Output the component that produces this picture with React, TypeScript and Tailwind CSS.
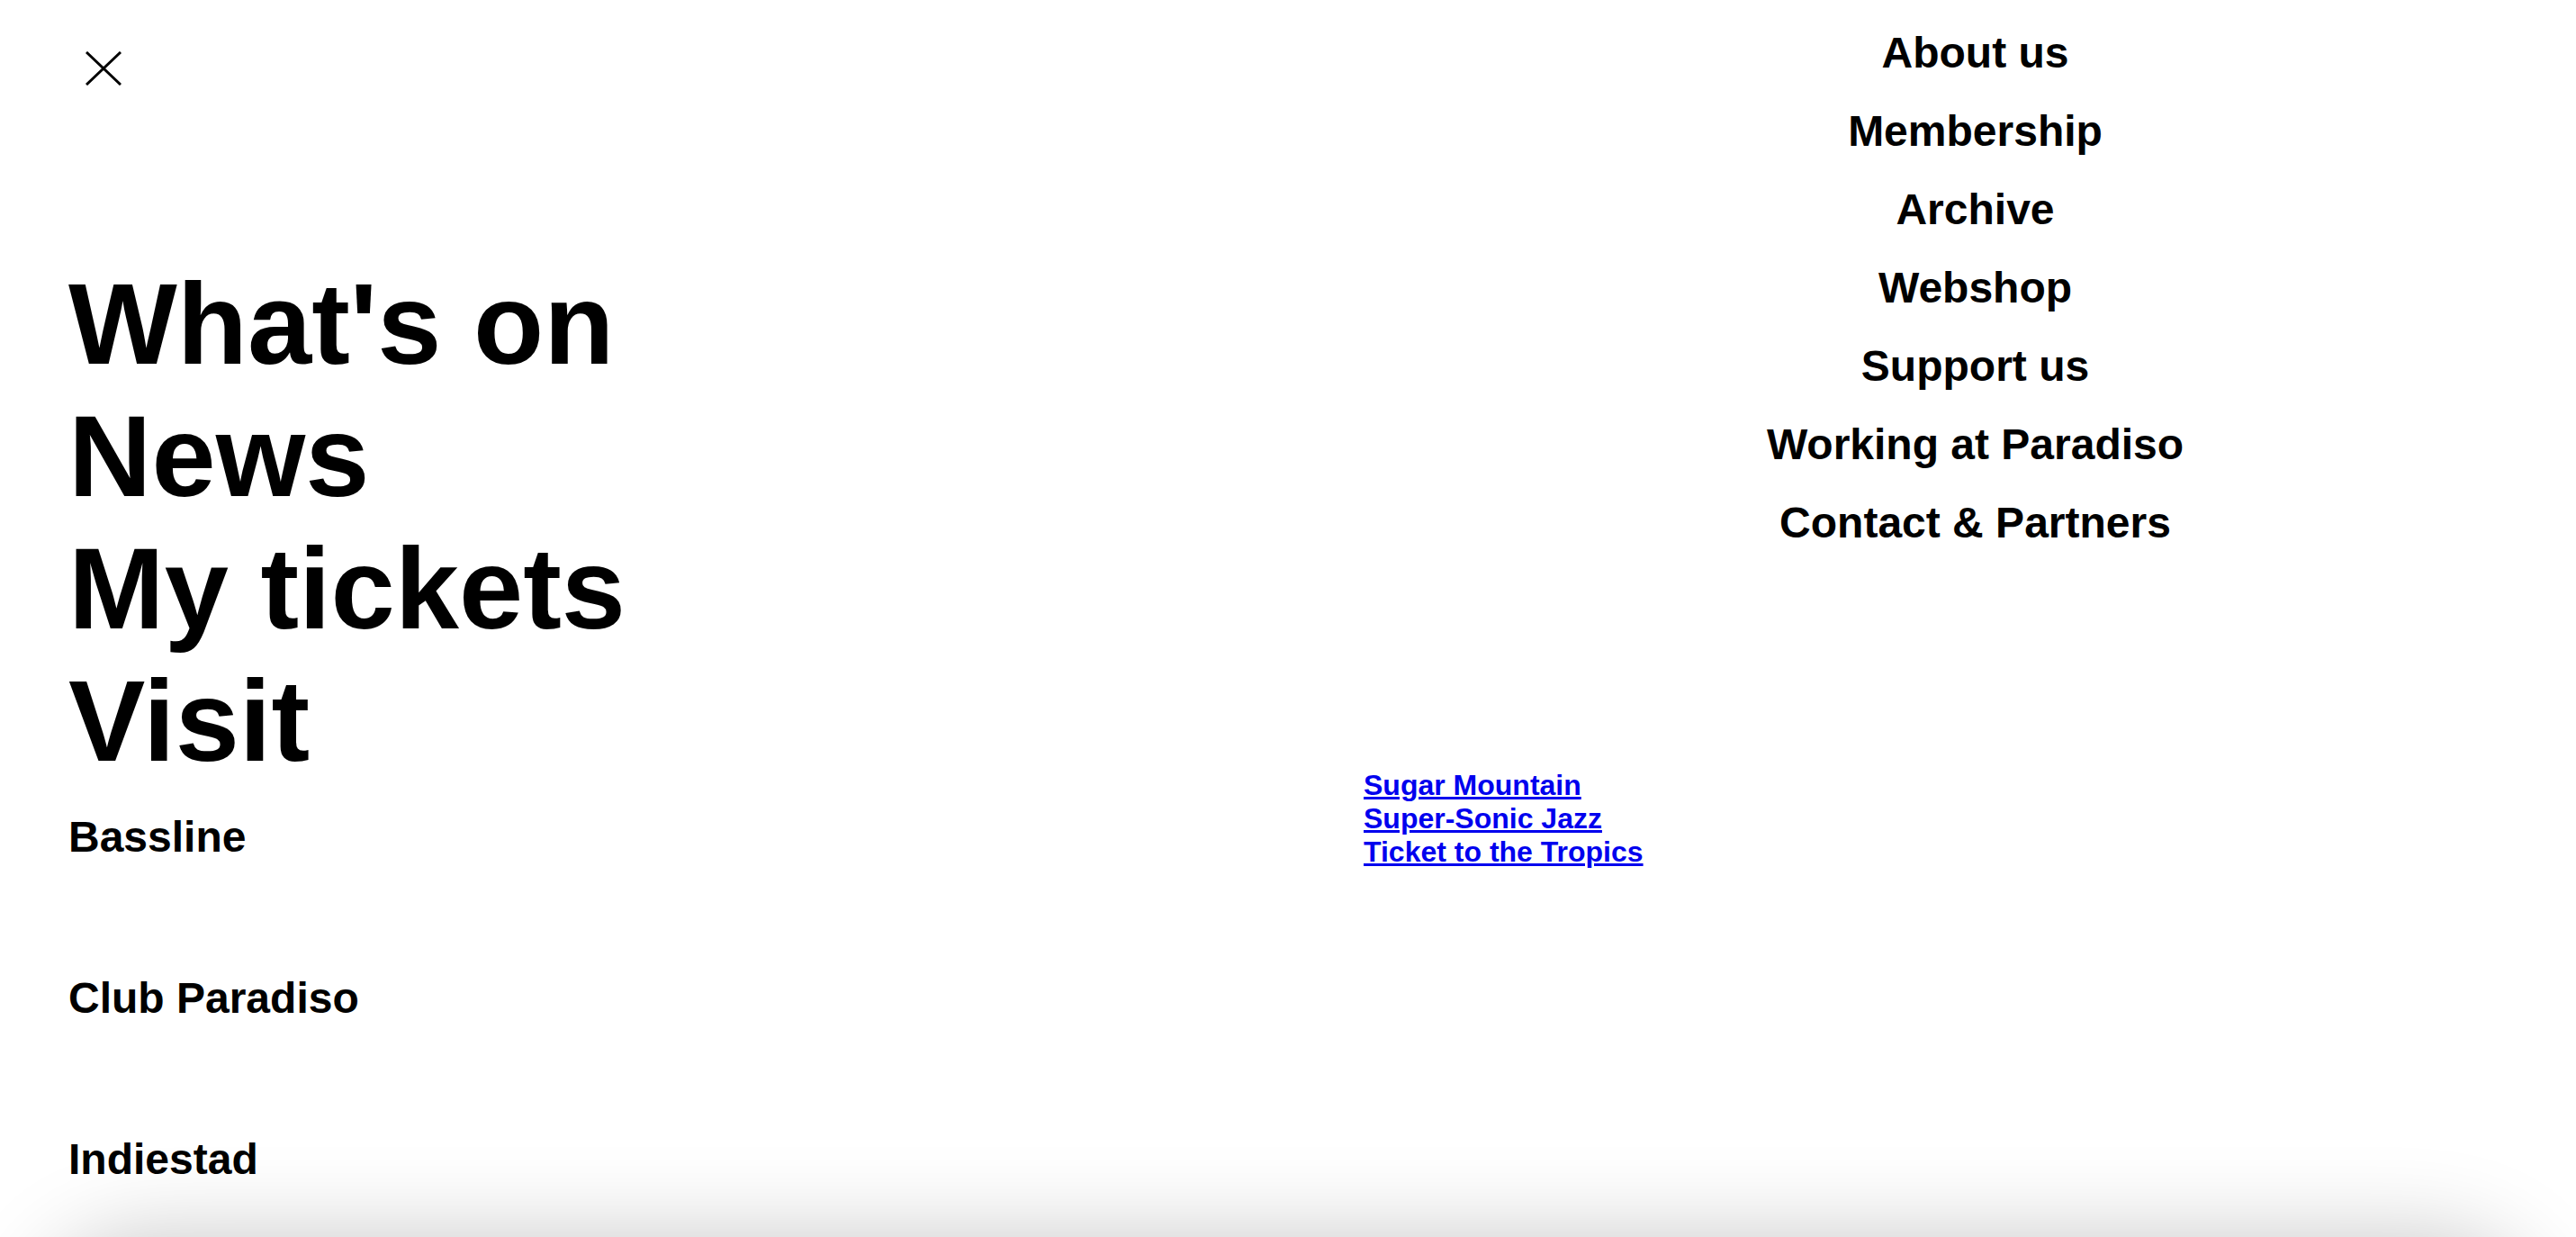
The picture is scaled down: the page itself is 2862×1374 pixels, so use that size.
const mainLinks = ["What's on", 'News', 'My tickets', 'Visit']
const venues = ['Bassline', 'Club Paradiso', 'Indiestad']
const sideLinks = [
  'About us',
  'Membership',
  'Archive',
  'Webshop',
  'Support us',
  'Working at Paradiso',
  'Contact & Partners',
]
const series = ['Sugar Mountain', 'Super-Sonic Jazz', 'Ticket to the Tropics']

function CloseIcon() {
  return (
    <svg width="40" height="38" viewBox="0 0 40 38" aria-hidden="true" className="block">
      <path d="M1 1 39 37M39 1 1 37" stroke="currentColor" strokeWidth="3" fill="none" />
    </svg>
  )
}

export default function App() {
  return (
    <div className="relative h-[1374px] overflow-hidden bg-white font-['Liberation_Sans',Arial,sans-serif] text-black">
      <div className="flex">
        <div className="w-[1515px] shrink-0">
          <button type="button" aria-label="Close menu" className="ml-[95px] mt-[57px] block text-black">
            <CloseIcon />
          </button>
          <nav className="mt-[191px] pl-[76px]">
            <ul>
              {mainLinks.map((item) => (
                <li key={item} className="whitespace-nowrap text-[128px] font-bold leading-[147px]">
                  {item}
                </li>
              ))}
            </ul>
            <ul className="mt-[27px] flex flex-col gap-[121.5px]">
              {venues.map((item) => (
                <li key={item} className="whitespace-nowrap text-[48px] font-bold leading-[57.5px]">
                  {item}
                </li>
              ))}
            </ul>
          </nav>
        </div>

        <div className="flex-1">
          <ul className="pl-[12px] pt-[15px] text-center text-[48px] font-bold leading-[87px]">
            {sideLinks.map((item) => (
              <li key={item}>{item}</li>
            ))}
          </ul>
          <ul className="mt-[230px] text-[32px] font-bold leading-[36.8px]">
            {series.map((item) => (
              <li key={item}>
                <a href="#" className="text-[#0000ee] underline">
                  {item}
                </a>
              </li>
            ))}
          </ul>
        </div>
      </div>

      {/* edge of the page beneath the overlay */}
      <div className="absolute left-[40px] right-[40px] top-full h-[300px] rounded-[120px] bg-white shadow-[0_0_100px_rgba(0,0,0,0.22)]" />
    </div>
  )
}
